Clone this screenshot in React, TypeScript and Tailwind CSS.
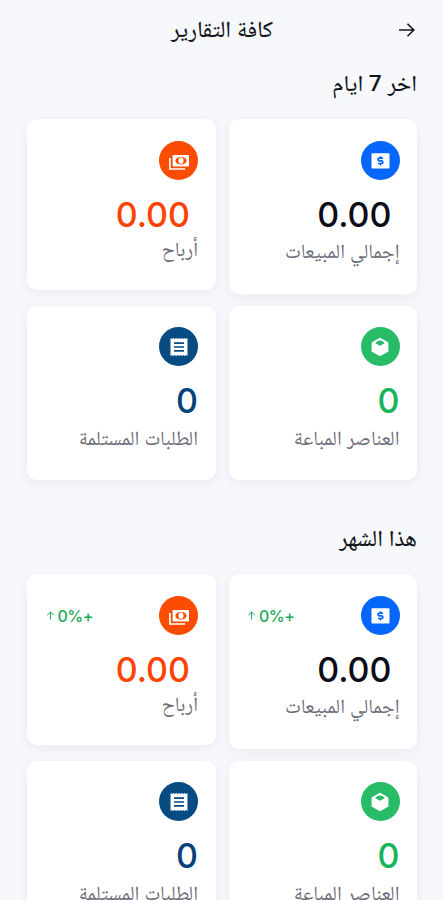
import type { ReactNode } from 'react'
import clsx from 'clsx'

type Report = {
  id: string
  label: string
  value: string
  color: string
  badge: string
  card: string
  labelClass: string
  trend: boolean
  icon: ReactNode
}

const SalesIcon = () => (
  <svg className="h-[19px] w-[19px]" viewBox="0 0 19 19" fill="none">
    <rect x="0.5" y="2.2" width="18" height="15.4" rx="1" fill="white" />
    <path
      d="M12 7.2H8.3a1 1 0 0 0 0 2.6h2.2a1 1 0 0 1 0 2.7H7M9.5 5.2v2M9.5 12.4v2"
      stroke="#0566fb"
      strokeWidth="1.7"
    />
  </svg>
)

const ProfitIcon = () => (
  <svg className="h-5 w-5" viewBox="0 0 20 20" fill="none">
    <path d="M.9 7v11h15.2" stroke="white" strokeWidth="1.7" />
    <rect x="3.6" y="4" width="16.4" height="11.6" rx="0.8" fill="white" />
    <ellipse cx="12" cy="9.7" rx="5.6" ry="3.8" fill="#fb4c02" />
    <ellipse cx="12" cy="9.7" rx="2.5" ry="3.1" fill="white" />
  </svg>
)

const ItemsIcon = () => (
  <svg className="h-5 w-5" viewBox="0 0 20 20">
    <path
      d="M10 .8l7.7 4.1c.5.3.7.6.7 1.1v8c0 .5-.2.9-.7 1.1L10 19.2l-7.7-4.1c-.5-.2-.7-.6-.7-1.1V6c0-.5.2-.8.7-1.1z"
      fill="white"
    />
    <path d="M10 3.6c2 0 3.6 1 4.6 2.6L10 8.7 5.4 6.2c1-1.6 2.6-2.6 4.6-2.6z" fill="#28bc68" />
  </svg>
)

const OrdersIcon = () => (
  <svg className="h-5 w-5" viewBox="0 0 20 20">
    <path
      d="M1.5 1l1.4 1 1.4-1 1.4 1 1.4-1 1.5 1L10 1l1.4 1 1.4-1 1.4 1 1.5-1 1.4 1 1.4-1v18l-1.4-1-1.4 1-1.5-1-1.4 1-1.4-1-1.4 1-1.4-1-1.5 1-1.4-1-1.4 1-1.4-1-1.4 1z"
      fill="white"
    />
    <path d="M5 6.2h10M5 10h10M5 13.8h10" stroke="#064b81" strokeWidth="1.7" />
  </svg>
)

const reports: Report[] = [
  {
    id: 'sales',
    label: 'إجمالي المبيعات',
    value: '0.00',
    color: 'text-[#0c0d18] pr-[8px]',
    badge: 'bg-[#0566fb]',
    card: 'h-[175px]',
    labelClass: 'mt-[4px]',
    trend: true,
    icon: <SalesIcon />
  },
  {
    id: 'profit',
    label: 'أرباح',
    value: '0.00',
    color: 'text-[#fb4304] pr-[8px]',
    badge: 'bg-[#fb4c02]',
    card: 'h-[171px]',
    labelClass: 'mt-[2px]',
    trend: true,
    icon: <ProfitIcon />
  },
  {
    id: 'items',
    label: 'العناصر المباعة',
    value: '0',
    color: 'text-[#17b45c]',
    badge: 'bg-[#28bc68]',
    card: 'h-[174px]',
    labelClass: 'mt-[5px]',
    trend: false,
    icon: <ItemsIcon />
  },
  {
    id: 'orders',
    label: 'الطلبات المستلمة',
    value: '0',
    color: 'text-[#05427a]',
    badge: 'bg-[#064b81]',
    card: 'h-[174px]',
    labelClass: 'mt-[5px]',
    trend: false,
    icon: <OrdersIcon />
  }
]

function Change() {
  return (
    <div dir="ltr" className="flex items-center gap-[3px] text-[#20a95b]">
      <svg className="h-[9px] w-[9px]" viewBox="0 0 9 9" fill="none" stroke="currentColor">
        <path d="M4.5 8.5V1M1.2 4.2L4.5 1l3.3 3.2" />
      </svg>
      <span className="font-[Inter,sans-serif] text-[16px] leading-5 font-medium tracking-[-0.5px]">0%+</span>
    </div>
  )
}

function ReportCard({ report, change }: { report: Report; change?: boolean }) {
  return (
    <div
      className={clsx(
        'rounded-[10px] bg-white pr-[17.5px] pl-[18.5px] shadow-[0_3px_12px_rgba(30,40,70,0.06)]',
        report.trend ? 'pt-[22px]' : 'pt-[21px]',
        report.card
      )}
    >
      <div className="flex items-center justify-between">
        <div className={clsx('flex h-[39px] w-[39px] items-center justify-center rounded-full', report.badge)}>
          {report.icon}
        </div>
        {change && report.trend && <Change />}
      </div>
      <p className={clsx('mt-[15px] font-[Inter,sans-serif] text-[34px] leading-10 font-medium', report.color)}>
        {report.value}
      </p>
      <p className={clsx('text-[20.3px] leading-6 whitespace-nowrap text-[#6b6b78]', report.labelClass)}>
        {report.label}
      </p>
    </div>
  )
}

function ReportSection({ title, change }: { title: string; change?: boolean }) {
  return (
    <section>
      <h2 className="h-[30px] text-[22.8px] leading-[30px] font-medium">{title}</h2>
      <div className="mt-[20px] grid grid-cols-2 items-start gap-x-[13px] gap-y-[12px]">
        {reports.map((report) => (
          <ReportCard key={report.id} report={report} change={change} />
        ))}
      </div>
    </section>
  )
}

export default function App() {
  return (
    <div
      dir="rtl"
      className="h-[900px] w-[443px] overflow-hidden bg-[#f6f8fc] pr-[26px] pl-[27px] font-[Roboto,'Noto_Naskh_Arabic',sans-serif] text-[#15161c]"
    >
      <header className="grid h-[60px] grid-cols-[1fr_auto_1fr] items-center">
        <svg className="h-[18px] w-[20px]" viewBox="0 0 20 18" fill="none" stroke="currentColor" strokeWidth="1.6">
          <path d="M2 9h15M10.5 2.7L16.8 9l-6.3 6.3" />
        </svg>
        <h1 className="text-[23px] leading-8 font-medium">كافة التقارير</h1>
      </header>
      <main className="flex flex-col gap-[44px] pt-[9px]">
        <ReportSection title="اخر 7 ايام" />
        <ReportSection title="هذا الشهر" change />
      </main>
    </div>
  )
}
